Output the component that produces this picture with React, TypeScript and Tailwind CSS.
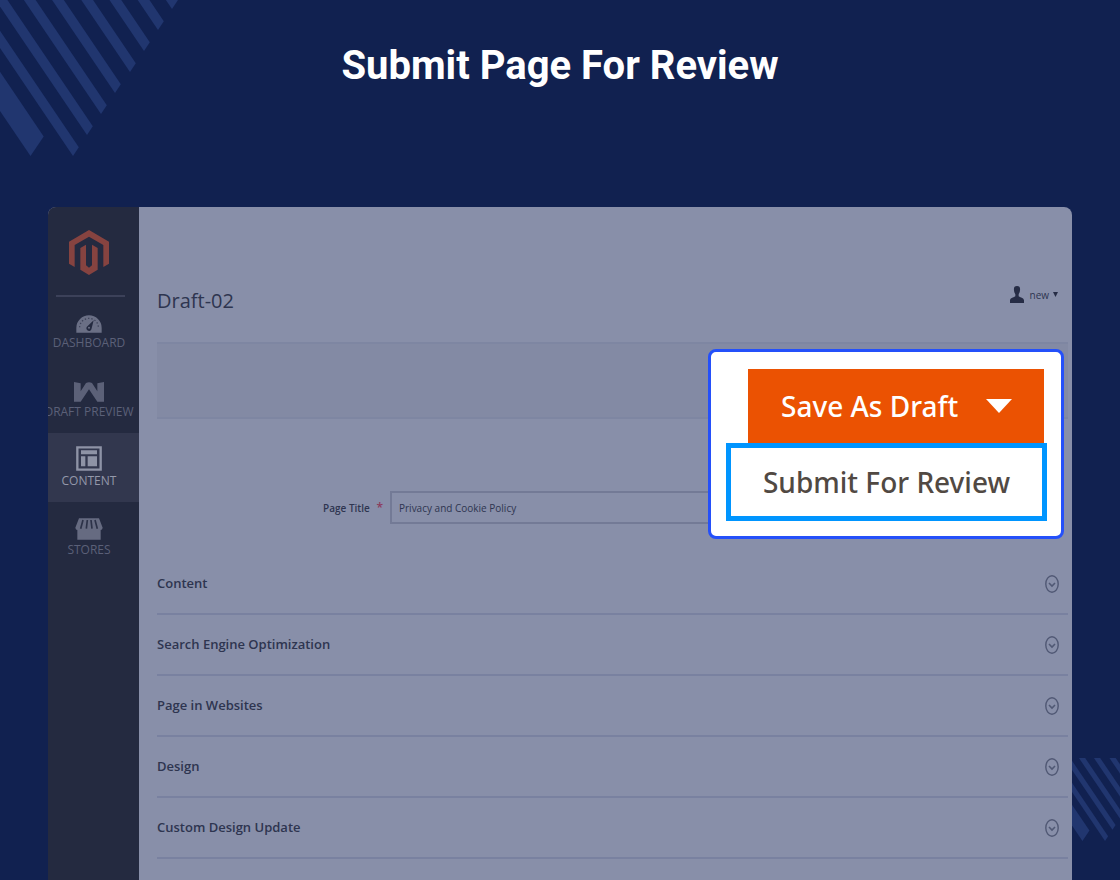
import type { ReactNode } from "react";

const sections = [
  "Content",
  "Search Engine Optimization",
  "Page in Websites",
  "Design",
  "Custom Design Update",
];

// Lower tip of every thin stripe, the rest follows the same diagonal
const stripeTips = [
  [73, 156],
  [87, 135],
  [101, 114],
  [115, 93],
  [130, 72],
  [144, 51],
  [158, 30],
  [172, 9],
];

function Stripes({ className, viewBox }: { className: string; viewBox: string }) {
  return (
    <svg className={className} viewBox={viewBox} fill="#21366f" aria-hidden="true">
      <path d="M30.5 156 L43.7 136.5 L-76.3 -41 L-89.5 -21.5 Z" />
      {stripeTips.map(([x, y]) => (
        <path key={x} d={`M${x} ${y} l5.8 -8.8 l-120 -177.4 l-5.8 8.8 Z`} />
      ))}
    </svg>
  );
}

function MagentoLogo() {
  return (
    <svg className="h-[45px] w-10" viewBox="88 89 120 135" fill="#864340" aria-hidden="true">
      <path d="M148 89 208 124V190L191 200V134L148 109 105 134V200L88 190V124Z" />
      <path d="M122 143 139 133V195L148 202 157 195V133L174 143V208L148 224 122 208Z" />
    </svg>
  );
}

function DashboardIcon() {
  return (
    <svg className="h-[18px] w-[26px]" viewBox="0 0 78 54" aria-hidden="true">
      <path d="M1 53V38a38 37 0 0 1 76 0v15Z" fill="#6a6f85" />
      <path
        d="M11 37a28 27 0 0 1 56 0"
        fill="none"
        stroke="#3d4259"
        strokeWidth="4"
        strokeDasharray="4 6"
      />
      <path d="M53 16 47 40a8 8 0 1 1-12-7Z" fill="#242a40" />
      <circle cx="39" cy="38" r="3" fill="#6a6f85" />
    </svg>
  );
}

function DraftIcon() {
  return (
    <svg className="h-5 w-[30px]" viewBox="0 0 90 60" fill="#5c6178" aria-hidden="true">
      <path d="M0 0 20 4V28L36 3Q45-1 54 3L70 28V4L90 0V59H70L45 22 20 59H0Z" />
    </svg>
  );
}

function ContentIcon() {
  return (
    <svg className="h-[25px] w-[26px]" viewBox="0 0 78 75" aria-hidden="true">
      <path d="M4 4H74V71H4Z" fill="none" stroke="#8e93a6" strokeWidth="7" />
      <path d="M15 13H63V25H15ZM15 31H28V61H15ZM35 31H63V61H35Z" fill="#8e93a6" />
    </svg>
  );
}

function StoresIcon() {
  return (
    <svg className="h-[22px] w-7" viewBox="0 0 84 66" aria-hidden="true">
      <path d="M12 1H72L83 29Q82 36 77 36V65H7V36Q2 36 1 29Z" fill="#666b81" />
      <path
        d="M24 6 17 32M37 6 34 32M48 6 51 32M60 6 67 32"
        stroke="#2c3248"
        strokeWidth="5"
        fill="none"
      />
    </svg>
  );
}

function NavItem({ label, icon, active }: { label: string; icon: ReactNode; active?: boolean }) {
  return (
    <a
      href="#"
      className={`flex h-[69px] flex-col items-center pr-[9px] ${
        active ? "bg-[#32374e] text-[#9498aa]" : "text-[#5b6078]"
      }`}
    >
      <span className="flex h-10 items-end pb-0.5">{icon}</span>
      <span className="text-xs leading-4 whitespace-nowrap">{label}</span>
    </a>
  );
}

function Sidebar() {
  return (
    <nav className="flex w-[91px] shrink-0 flex-col overflow-hidden rounded-tl-lg bg-[#242a40]">
      <div className="flex h-[88px] justify-center pt-[23px] pr-[9px]">
        <MagentoLogo />
      </div>
      <div className="mr-3.5 ml-2 border-t-2 border-[#3c4159]" />
      <div className="-mt-0.5">
        <NavItem label="DASHBOARD" icon={<DashboardIcon />} />
        <NavItem label="DRAFT PREVIEW" icon={<DraftIcon />} />
        <NavItem label="CONTENT" icon={<ContentIcon />} active />
        <NavItem label="STORES" icon={<StoresIcon />} />
      </div>
    </nav>
  );
}

function SectionRow({ title }: { title: string }) {
  return (
    <button
      type="button"
      className="flex h-[61px] w-full items-center justify-between border-b-2 border-[#7981a0] pr-[9px] text-left text-[13px] font-semibold"
    >
      {title}
      <svg className="h-[18px] w-3.5" viewBox="0 0 14 18" fill="none" aria-hidden="true">
        <ellipse cx="7" cy="9" rx="6.2" ry="8.2" stroke="#505874" strokeWidth="1.4" />
        <path d="M4 8 7 11 10 8" stroke="#505874" strokeWidth="1.6" />
      </svg>
    </button>
  );
}

function ActionMenu() {
  return (
    <div className="absolute top-[142px] right-2 w-[356px] rounded-lg border-[3px] border-[#2450fa] bg-white pt-[17px] pr-3.5 pb-[15px] pl-[15px] font-['Noto_Sans',sans-serif] text-[28px] font-medium">
      <button
        type="button"
        className="ml-[22px] flex h-[74px] w-[296px] items-center justify-between bg-[#eb5202] pr-8 pl-[33px] text-white"
      >
        Save As Draft
        <svg className="h-3.5 w-[26px]" viewBox="0 0 26 14" fill="#fff" aria-hidden="true">
          <path d="M0 0H26L13 14Z" />
        </svg>
      </button>
      <button
        type="button"
        className="flex h-[78px] w-[321px] items-center justify-center border-[5px] border-[#0095ff] text-[#514943]"
      >
        Submit For Review
      </button>
    </div>
  );
}

export default function App() {
  return (
    <div className="relative flex min-h-screen flex-col overflow-hidden bg-[#112150] font-['Open_Sans',sans-serif]">
      <Stripes className="absolute top-0 left-0 h-40 w-[180px]" viewBox="0 0 180 160" />
      <Stripes className="absolute right-0 bottom-[38px] h-[84px] w-12" viewBox="11 0 90 158" />

      <header className="flex h-[207px] justify-center pt-[41px]">
        <h1 className="font-['Roboto',sans-serif] text-[40px] leading-[50px] font-bold text-white">
          Submit Page For Review
        </h1>
      </header>

      <div className="relative mx-12 flex flex-1 rounded-t-lg bg-[#888fa9] text-[#2e3550]">
        <Sidebar />
        <main className="min-w-0 flex-1 pr-1 pl-[18px]">
          <div className="flex h-[135px] items-end justify-between pr-2.5 pb-[27px]">
            <h2 className="text-[20px] leading-7">Draft-02</h2>
            <button type="button" className="mb-3 flex items-center text-[10px] leading-4">
              <svg className="mr-1.5 h-[17px] w-3.5" viewBox="0 0 42 51" fill="#262c45" aria-hidden="true">
                <path d="M21 0c8 0 10 5 9 13 0 6-3 9-4 12v6c7 5 15 4 16 12v8H0v-8c1-8 9-7 16-12v-6c-1-3-4-6-4-12C11 5 13 0 21 0Z" />
              </svg>
              new
              <svg className="ml-1 h-[5px] w-[5px]" viewBox="0 0 5 5" fill="#262c45" aria-hidden="true">
                <path d="M0 0H5L2.5 5Z" />
              </svg>
            </button>
          </div>

          <div className="h-[77px] border-y-2 border-[#7e86a2] bg-[#838aa4]" />

          <div className="mt-[72px] flex h-[33px] items-center">
            <label htmlFor="page-title" className="w-[233px] pr-[7px] text-right text-[10px] font-semibold">
              Page Title <span className="ml-1 text-xs text-[#8c3a5c]">*</span>
            </label>
            <input
              id="page-title"
              defaultValue="Privacy and Cookie Policy"
              className="mr-10 h-full min-w-0 flex-1 border-2 border-[#737a96] bg-transparent px-[7px] text-[10px]"
            />
          </div>

          <div className="mt-[30px]">
            {sections.map((title) => (
              <SectionRow key={title} title={title} />
            ))}
          </div>
        </main>
        <ActionMenu />
      </div>
    </div>
  );
}
